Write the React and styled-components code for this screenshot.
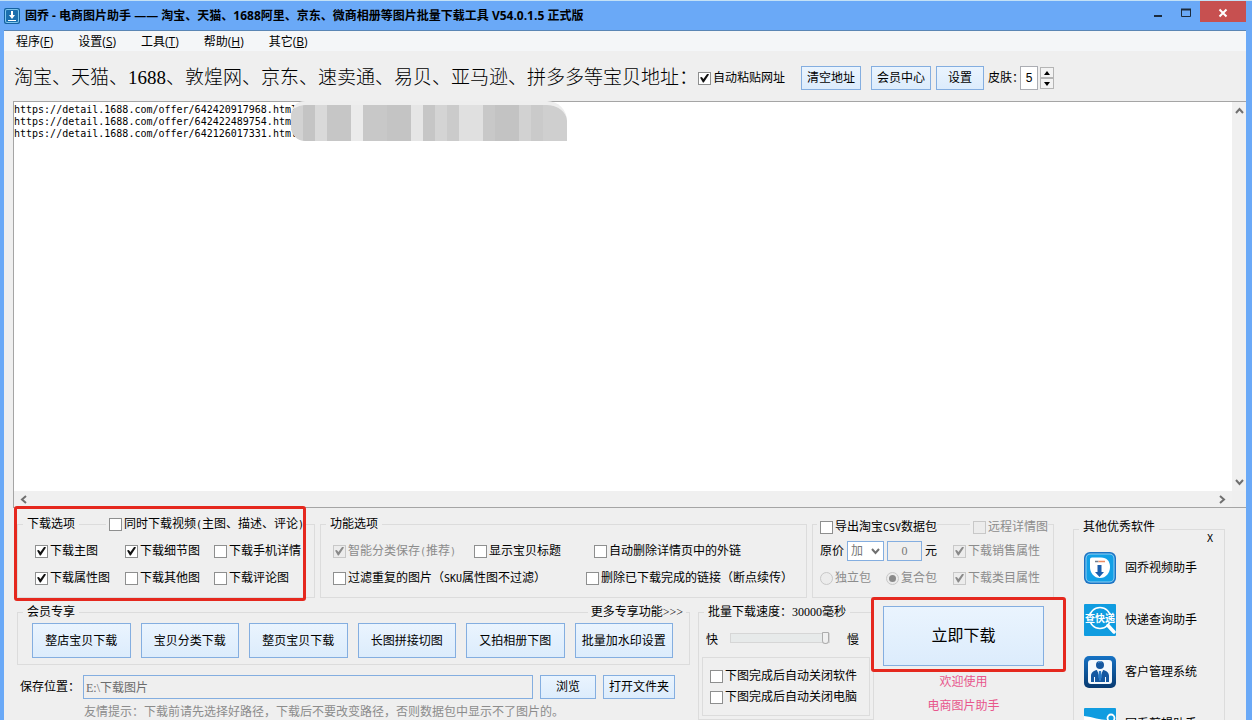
import { useState } from "react";
import styled, { createGlobalStyle, css } from "styled-components";

const URLS = [
  "https://detail.1688.com/offer/642420917968.html",
  "https://detail.1688.com/offer/642422489754.html",
  "https://detail.1688.com/offer/642126017331.html",
].join("\n");

const menus = [
  ["程序", "F"],
  ["设置", "S"],
  ["工具", "T"],
  ["帮助", "H"],
  ["其它", "B"],
];

const memberActions = [
  "整店宝贝下载",
  "宝贝分类下载",
  "整页宝贝下载",
  "长图拼接切图",
  "又拍相册下图",
  "批量加水印设置",
];

// [color, columns] pairs, left to right
const mosaicColumns = [
  ["#d2d2d2", 1],
  ["#c4c4c4", 1],
  ["#d9d9d9", 1],
  ["#c6c6c6", 2],
  ["#ebebeb", 1],
  ["#c8c8c8", 2],
  ["#c4c4c4", 2],
  ["#e6e6e6", 1],
  ["#c6c6c6", 1],
  ["#d4d4d4", 1],
  ["#cbcbcb", 1],
  ["#e0e0e0", 2],
  ["#c8c8c8", 1],
  ["#c3c3c3", 2],
  ["#d2d2d2", 1],
  ["#cacaca", 1],
  ["#cfcfcf", 2],
];

const Check = ({ children, ...props }) => (
  <CheckLabel $disabled={props.disabled}>
    <CheckInput type="checkbox" {...props} />
    <span>{children}</span>
  </CheckLabel>
);

const Radio = ({ children, ...props }) => (
  <CheckLabel $disabled={props.disabled}>
    <RadioInput type="radio" {...props} />
    <span>{children}</span>
  </CheckLabel>
);

const Logo = () => (
  <svg width="16" height="16" viewBox="0 0 16 16" aria-hidden="true">
    <rect width="16" height="16" rx="2" fill="#15619f" />
    <rect x="1" y="1" width="14" height="14" rx="2" fill="#7cc4ec" />
    <rect x="2" y="2" width="12" height="12" rx="1" fill="#1b6fae" />
    <path d="M7 3h2v4h2l-3 4-3-4h2z" fill="#fff" />
    <path d="M4 12h8v1H4z" fill="#fff" />
  </svg>
);

const VideoIcon = () => (
  <svg width="32" height="32" viewBox="0 0 32 32" aria-hidden="true">
    <rect width="32" height="32" rx="6" fill="#1b74c4" />
    <rect x="1.5" y="1.5" width="29" height="29" rx="5" fill="#8fd0f5" />
    <rect x="2.5" y="2.5" width="27" height="27" rx="4" fill="#12a0e6" />
    <path
      d="M8 5.500h9c6 0 9 4 9 9.500 0 6-4 11-10 11S6 21 6 15V7.500c0-1.200.8-2 2-2z"
      fill="#fff"
    />
    <path d="M11 9.500h3.500" stroke="#6f7f8f" strokeWidth="1.500" />
    <path d="M14.500 9.500H21" stroke="#ec8b62" strokeWidth="1.500" />
    <path d="M13.500 13h4v7h2.500l-4.500 5-4.500-5h2.500z" fill="#1a5fae" />
  </svg>
);

const ExpressIcon = () => (
  <svg width="32" height="32" viewBox="0 0 32 32" aria-hidden="true">
    <rect width="32" height="32" rx="1" fill="#109ce0" />
    <circle cx="16" cy="14" r="10.500" fill="none" stroke="#fff" strokeWidth="1.500" />
    <path d="M24 21.500l6 6.500" stroke="#fff" strokeWidth="3.500" strokeLinecap="round" />
    <rect x="2" y="10" width="28" height="9" fill="#109ce0" />
    <text
      x="16"
      y="18"
      textAnchor="middle"
      fontFamily="'Noto Sans CJK SC', sans-serif"
      fontWeight="700"
      fontSize="10"
      fill="#fff"
    >
      查快递
    </text>
  </svg>
);

const CustomerIcon = () => (
  <svg width="32" height="32" viewBox="0 0 32 32" aria-hidden="true">
    <defs>
      <linearGradient id="customer" x1="0" y1="0" x2="0" y2="1">
        <stop offset="0" stopColor="#1672c4" />
        <stop offset="1" stopColor="#083a70" />
      </linearGradient>
    </defs>
    <rect width="32" height="32" rx="5" fill="url(#customer)" />
    <rect x="4" y="4" width="24" height="24" rx="3" fill="#f4f9fd" />
    <circle cx="16" cy="9" r="4" fill="#1558a0" />
    <path d="M14 6.500c1-1 2.500-1 3.500-.5" stroke="#6fb0e6" fill="none" />
    <path d="M7 26v-6c0-3.500 2.500-5.500 6-6l3 7 3-7c3.500.5 6 2.500 6 6v6z" fill="#1558a0" />
    <path d="M13.500 14h5L16 25z" fill="#f4f9fd" />
    <path d="M15 15h2l1 6-2 4-2-4z" fill="#2a7ac4" />
    <path d="M10.500 21v5M21.500 21v5" stroke="#f4f9fd" />
  </svg>
);

const EditorIcon = () => (
  <svg width="32" height="32" viewBox="0 0 32 32" aria-hidden="true">
    <rect width="32" height="32" rx="1" fill="#109ce0" />
    <path d="M0 8c9 1 16 4 23 4l3 3c-9 1-18-1-26-3z" fill="#fff" />
    <circle cx="27" cy="10" r="3.500" fill="none" stroke="#fff" strokeWidth="1.800" />
    <circle cx="27" cy="22" r="3.500" fill="none" stroke="#fff" strokeWidth="1.800" />
  </svg>
);

const apps = [
  { name: "固乔视频助手", Icon: VideoIcon },
  { name: "快递查询助手", Icon: ExpressIcon },
  { name: "客户管理系统", Icon: CustomerIcon },
  { name: "固乔剪辑助手", Icon: EditorIcon },
];

const Chevron = ({ d }) => (
  <svg width="9" height="9" viewBox="0 0 9 9" aria-hidden="true">
    <path d={d} fill="none" stroke="#707070" strokeWidth="2" />
  </svg>
);

const App = () => {
  const [skin, setSkin] = useState(5);
  const [urls, setUrls] = useState(URLS);
  const [speed, setSpeed] = useState(30000);

  return (
    <>
      <GlobalStyle />
      <Window>
        <TitleBar>
          <Logo />
          <Title>
            固乔 - 电商图片助手 —— 淘宝、天猫、1688阿里、京东、微商相册等图片批量下载工具
            V54.0.1.5 正式版
          </Title>
          <WindowButton aria-label="最小化">
            <svg width="12" height="12" viewBox="0 0 12 12">
              <path d="M2 9h8" stroke="#1c2b3c" strokeWidth="2" />
            </svg>
          </WindowButton>
          <WindowButton aria-label="最大化">
            <svg width="12" height="12" viewBox="0 0 12 12">
              <path d="M1.500 2.500h9v7h-9z" fill="none" stroke="#1c2b3c" />
              <path d="M1 2.500h10" stroke="#1c2b3c" strokeWidth="2" />
            </svg>
          </WindowButton>
          <WindowButton $close aria-label="关闭">
            <svg width="12" height="12" viewBox="0 0 12 12">
              <path d="M2.500 2.500l7 7M9.500 2.500l-7 7" stroke="#fff" strokeWidth="2" />
            </svg>
          </WindowButton>
        </TitleBar>
        <Body>
          <MenuBar>
            {menus.map(([label, key]) => (
              <MenuItem key={key}>
                {label}(<u>{key}</u>)
              </MenuItem>
            ))}
          </MenuBar>
          <Toolbar>
            <Heading>
              淘宝、天猫、1688、敦煌网、京东、速卖通、易贝、亚马逊、拼多多等宝贝地址：
            </Heading>
            <Check defaultChecked>自动粘贴网址</Check>
            <ToolButtons>
              <Button onClick={() => setUrls("")}>清空地址</Button>
              <Button>会员中心</Button>
            </ToolButtons>
            <Button $wide>设置</Button>
            <SkinLabel htmlFor="skin">皮肤：</SkinLabel>
            <SkinInput id="skin" value={skin} readOnly />
            <Spinner>
              <SpinButton aria-label="增加" onClick={() => setSkin(skin + 1)}>
                <svg width="6" height="4" viewBox="0 0 6 4">
                  <path d="M3 0l3 4H0z" />
                </svg>
              </SpinButton>
              <SpinButton aria-label="减少" onClick={() => setSkin(skin - 1)}>
                <svg width="6" height="4" viewBox="0 0 6 4">
                  <path d="M0 0h6L3 4z" />
                </svg>
              </SpinButton>
            </Spinner>
          </Toolbar>
          <UrlPane>
            <UrlBox
              aria-label="宝贝地址"
              wrap="off"
              spellCheck="false"
              value={urls}
              onChange={(e) => setUrls(e.target.value)}
            />
            <Mosaic>
              {mosaicColumns.map(([color, span], i) => (
                <MosaicBar key={i} $color={color} $span={span} />
              ))}
            </Mosaic>
            <ScrollTrack $vertical>
              <Chevron d="M1 7l3.500-4L8 7" />
              <Chevron d="M1 2l3.500 4L8 2" />
            </ScrollTrack>
            <ScrollTrack>
              <Chevron d="M7 1L3 4.500 7 8" />
              <Chevron d="M2 1l4 3.500L2 8" />
            </ScrollTrack>
          </UrlPane>

          <Panel>
            <Settings>
              <OptionRow>
                <Group>
                  <Head>
                    <Legend>下载选项</Legend>
                    <HeadCheck $gap="27px">
                      <Check>
                        同时下载视频<Half>(</Half>主图、描述、评论<Half>)</Half>
                      </Check>
                    </HeadCheck>
                  </Head>
                  <Options $cols="90px 89px auto" $pad="17px">
                    <Check defaultChecked>下载主图</Check>
                    <Check defaultChecked>下载细节图</Check>
                    <Check>下载手机详情</Check>
                    <Check defaultChecked>下载属性图</Check>
                    <Check>下载其他图</Check>
                    <Check>下载评论图</Check>
                  </Options>
                  <Callout />
                </Group>
                <Group>
                  <Head>
                    <Legend>功能选项</Legend>
                  </Head>
                  <Options $cols="141px 120px auto" $pad="12px">
                    <Check defaultChecked disabled>
                      智能分类保存<Half>(</Half>推荐<Half>)</Half>
                    </Check>
                    <Check>显示宝贝标题</Check>
                    <Check>自动删除详情页中的外链</Check>
                  </Options>
                  <Options $cols="253px auto" $pad="12px">
                    <Check>
                      过滤重复的图片（<Half>SKU</Half>属性图不过滤）
                    </Check>
                    <Check>删除已下载完成的链接（断点续传）</Check>
                  </Options>
                </Group>
                <Group>
                  <Head $low>
                    <HeadCheck $gap="4px">
                      <Check>
                        导出淘宝<Half>CSV</Half>数据包
                      </Check>
                    </HeadCheck>
                    <HeadCheck $gap="33px">
                      <Check disabled>远程详情图</Check>
                    </HeadCheck>
                  </Head>
                  <Options $cols="133px auto" $pad="7px">
                    <Price>
                      <label htmlFor="mode">原价</label>
                      <SelectWrap>
                        <Select id="mode">
                          <option>加</option>
                          <option>减</option>
                        </Select>
                        <Chevron d="M1 2l3.500 4L8 2" />
                      </SelectWrap>
                      <PriceInput id="amount" defaultValue="0" />
                      <label htmlFor="amount">元</label>
                    </Price>
                    <Check defaultChecked disabled>
                      下载销售属性
                    </Check>
                    <Radios>
                      <Radio name="pack" disabled>
                        独立包
                      </Radio>
                      <Radio name="pack" defaultChecked disabled>
                        复合包
                      </Radio>
                    </Radios>
                    <Check defaultChecked disabled>
                      下载类目属性
                    </Check>
                  </Options>
                </Group>
              </OptionRow>

              <ActionRow>
                <Member>
                  <Group>
                    <Head>
                      <Legend>会员专享</Legend>
                      <More href="#more">更多专享功能&gt;&gt;&gt;</More>
                    </Head>
                    <MemberButtons>
                      {memberActions.map((name) => (
                        <Button key={name} $tall>
                          {name}
                        </Button>
                      ))}
                    </MemberButtons>
                  </Group>
                  <SaveRow>
                    <label htmlFor="path">保存位置：</label>
                    <PathInput id="path" defaultValue="E:\下载图片" />
                    <Button>浏览</Button>
                    <Button $wide>打开文件夹</Button>
                  </SaveRow>
                  <Hint>
                    友情提示：下载前请先选择好路径，下载后不要改变路径，否则数据包中显示不了图片的。
                  </Hint>
                </Member>
                <Group>
                  <Head>
                    <Legend as="label" htmlFor="speed">
                      批量下载速度：{speed}毫秒
                    </Legend>
                  </Head>
                  <SpeedRow>
                    快
                    <Slider
                      id="speed"
                      type="range"
                      min="0"
                      max="30000"
                      step="1000"
                      value={speed}
                      onChange={(e) => setSpeed(Number(e.target.value))}
                    />
                    慢
                  </SpeedRow>
                  <AfterBox>
                    <Check>下图完成后自动关闭软件</Check>
                    <Check>下图完成后自动关闭电脑</Check>
                  </AfterBox>
                </Group>
                <Download>
                  <DownloadButton>立即下载</DownloadButton>
                  <Welcome>欢迎使用</Welcome>
                  <Welcome>电商图片助手</Welcome>
                  <Callout $download />
                </Download>
              </ActionRow>
            </Settings>

            <Aside>
              <Head>
                <Legend>其他优秀软件</Legend>
              </Head>
              <AsideClose aria-label="X">X</AsideClose>
              <AppList>
                {apps.map(({ name, Icon }) => (
                  <AppLink key={name} href="#app">
                    <Icon />
                    {name}
                  </AppLink>
                ))}
              </AppList>
            </Aside>
          </Panel>
        </Body>
      </Window>
    </>
  );
};

// Styled Components
const GlobalStyle = createGlobalStyle`
  * {
    box-sizing: border-box;
  }
  body {
    margin: 0;
    font-family: "Liberation Serif", "Noto Sans CJK SC", serif;
    font-size: 12px;
    line-height: 16px;
    color: #000;
    white-space: nowrap;
  }
  button, input, select, textarea {
    font: inherit;
    color: inherit;
    margin: 0;
    padding: 0;
  }
  a {
    color: inherit;
    text-decoration: none;
  }
`;

const Window = styled.div`
  display: flex;
  flex-direction: column;
  height: 100vh;
  overflow: hidden;
  padding: 0 6px 0 4px;
  background: #6aa9f7;
  border-top: 1px solid #c3e1f6;
`;

const TitleBar = styled.header`
  display: flex;
  align-items: center;
  height: 30px;
  flex: none;
  box-shadow: 0 -1px 0 #5a86b5 inset;
`;

const Title = styled.h1`
  flex: 1;
  margin: 0 0 0 5px;
  font-family: "Open Sans", "Noto Sans CJK SC", sans-serif;
  font-size: 12px;
  font-weight: 700;
`;

const WindowButton = styled.button`
  display: flex;
  justify-content: center;
  align-items: center;
  align-self: flex-start;
  width: 28px;
  height: 21px;
  padding-top: 2px;
  border: none;
  background: transparent;
  ${(props) =>
    props.$close &&
    css`
      width: 46px;
      background: #c75050;
    `};
`;

const Body = styled.main`
  flex: 1;
  min-height: 0;
  display: flex;
  flex-direction: column;
  background: #efefef;
`;

const MenuBar = styled.nav`
  display: flex;
  align-items: center;
  gap: 25px;
  height: 20px;
  flex: none;
  padding: 2px 0 0 12px;
  background: #f4f6f8;
`;

const MenuItem = styled.button`
  border: none;
  background: none;
  font-family: "Open Sans", "Noto Sans CJK SC", sans-serif;
`;

const Toolbar = styled.div`
  display: flex;
  align-items: center;
  height: 50px;
  flex: none;
  padding: 4px 0 0 10px;
`;

const Heading = styled.h2`
  margin: 0;
  font-size: 19px;
  line-height: 24px;
  font-weight: 300;
`;

const ToolButtons = styled.div`
  display: flex;
  gap: 10px;
  margin: 0 5px 0 16px;
`;

const Button = styled.button`
  height: ${(props) => (props.$tall ? "35px" : "24px")};
  padding: 0 ${(props) => (props.$wide ? "11px" : "5px")};
  border: 1px solid #84aee0;
  background: linear-gradient(#eaf4fe, #dcecfc);
  cursor: pointer;
`;

const SkinLabel = styled.label`
  margin-left: 4px;
`;

const SkinInput = styled.input`
  width: 18px;
  height: 24px;
  margin: 0 2px 0 -4px;
  border: 1px solid #abadb3;
  background: #fff;
  text-align: center;
  font-family: "Liberation Sans", sans-serif;
`;

const Spinner = styled.div`
  display: flex;
  flex-direction: column;
`;

const SpinButton = styled.button`
  display: flex;
  justify-content: center;
  align-items: center;
  width: 14px;
  height: 11px;
  border: 1px solid #b5b5b5;
  background: #f3f3f3;
`;

const UrlPane = styled.section`
  flex: 1;
  min-height: 0;
  display: grid;
  grid-template: 1fr 16px / 1fr 14px;
  position: relative;
  margin-left: 9px;
  border: 1px solid #a5a5a5;
  border-right: none;
`;

const UrlBox = styled.textarea`
  display: block;
  width: 100%;
  height: 100%;
  padding: 2px 0 0;
  border: none;
  outline: none;
  resize: none;
  overflow: hidden;
  background: #fff;
  font-family: "DejaVu Sans Mono", monospace;
  font-size: 10px;
  line-height: 12px;
`;

// Covers the tail of the addresses
const Mosaic = styled.div`
  position: absolute;
  top: -1px;
  left: 277px;
  display: flex;
  width: 276px;
  height: 40px;
  overflow: hidden;
  border-top: 4px solid #eee;
  border-radius: 14px 20px 0 14px;
`;

const MosaicBar = styled.span`
  flex: ${(props) => props.$span};
  background: ${(props) => props.$color};
`;

const ScrollTrack = styled.div`
  display: flex;
  justify-content: space-between;
  align-items: center;
  padding: 0 5px;
  background: #f0f0f0;
  ${(props) =>
    props.$vertical &&
    css`
      flex-direction: column;
      padding: 4px 0;
    `};
`;

const Panel = styled.section`
  display: flex;
  flex: none;
  gap: 19px;
  padding: 16px 21px 0 13px;
`;

const Settings = styled.div`
  flex: 1;
`;

const OptionRow = styled.div`
  display: grid;
  grid-template-columns: 298fr 487fr 242fr;
  gap: 5px;
`;

const ActionRow = styled.div`
  display: grid;
  grid-template-columns: 1fr 176px 172px;
  gap: 8px;
  margin-top: 14px;
`;

const Group = styled.div`
  position: relative;
  display: flex;
  flex-direction: column;
  gap: 7px;
  padding-bottom: 9px;
  border: 1px solid #dcdcdc;
`;

const Head = styled.div`
  display: flex;
  align-items: center;
  height: ${(props) => (props.$low ? "26px" : "20px")};
  margin: -11px 0 ${(props) => (props.$low ? "-6px" : "0")};
`;

const Legend = styled.span`
  margin-left: 5px;
  padding: 0 4px;
  background: #efefef;
`;

const HeadCheck = styled.div`
  margin-left: ${(props) => props.$gap};
  padding-left: 3px;
  background: #efefef;
`;

const Options = styled.div`
  display: grid;
  grid-template-columns: ${(props) => props.$cols};
  grid-auto-rows: 20px;
  row-gap: 7px;
  align-items: center;
  padding-left: ${(props) => props.$pad};
`;

const CheckLabel = styled.label`
  display: flex;
  align-items: center;
  gap: 2px;
  color: ${(props) => (props.$disabled ? "#8c8c8c" : "#000")};
`;

const CheckInput = styled.input`
  appearance: none;
  display: flex;
  justify-content: center;
  align-items: center;
  flex: none;
  width: 13px;
  height: 13px;
  border: 1px solid #8e8f8f;
  background: #fff;
  &:checked::before {
    content: "";
    width: 9px;
    height: 9px;
    background: #111;
    clip-path: polygon(0 45%, 20% 38%, 38% 62%, 82% 0, 100% 10%, 42% 100%, 32% 100%);
  }
  &:disabled {
    border-color: #c8c8c8;
    background: #ececec;
  }
  &:disabled::before {
    background: #8a8a8a;
  }
`;

const RadioInput = styled(CheckInput)`
  border-radius: 50%;
  &:checked::before {
    width: 7px;
    height: 7px;
    border-radius: 50%;
    clip-path: none;
  }
`;

// Latin runs take half the width of a Chinese character
const Half = styled.span`
  font-family: "DejaVu Sans Mono", monospace;
  font-size: 10px;
`;

const Callout = styled.div`
  position: absolute;
  inset: -19px 8px -4px -4px;
  border: 3px solid #e5281e;
  border-radius: 3px;
  pointer-events: none;
  ${(props) =>
    props.$download &&
    css`
      inset: -15px -12px 48px -12px;
    `};
`;

const Price = styled.div`
  display: flex;
  align-items: center;
  gap: 3px;
`;

const SelectWrap = styled.div`
  display: grid;
  align-items: center;
  width: 37px;
  svg {
    grid-area: 1 / 1;
    justify-self: end;
    margin-right: 4px;
    pointer-events: none;
  }
`;

const Select = styled.select`
  grid-area: 1 / 1;
  appearance: none;
  width: 100%;
  height: 20px;
  padding-left: 3px;
  border: 1px solid #84aee0;
  border-radius: 0;
  background: #fff;
  color: #777;
`;

const PriceInput = styled.input`
  width: 35px;
  height: 20px;
  border: 1px solid #84aee0;
  background: #efefef;
  color: #777;
  text-align: center;
`;

const Radios = styled.div`
  display: flex;
  gap: 15px;
`;

const Member = styled.div`
  display: flex;
  flex-direction: column;
`;

const More = styled.a`
  margin: 0 3px 0 auto;
  padding: 0 3px;
  background: #efefef;
`;

const MemberButtons = styled.div`
  display: grid;
  grid-template-columns: repeat(6, 1fr);
  gap: 10px;
  margin: -6px 16px -3px 14px;
`;

const SaveRow = styled.div`
  display: flex;
  align-items: center;
  gap: 7px;
  margin: 10px 15px 5px 3px;
  label {
    margin-right: -4px;
  }
  ${Button} {
    min-width: 56px;
  }
  ${Button}:last-child {
    padding: 0 5px;
  }
`;

const PathInput = styled.input`
  flex: 1;
  height: 24px;
  padding-left: 2px;
  border: 1px solid #84aee0;
  background: #efefef;
  color: #6c6c6c;
`;

const Hint = styled.p`
  margin: 0 0 0 67px;
  color: #8c8c8c;
`;

const SpeedRow = styled.div`
  display: flex;
  align-items: center;
  justify-content: space-between;
  margin: 3px 14px 0 7px;
`;

const Slider = styled.input`
  appearance: none;
  width: 100px;
  height: 10px;
  margin: 0 6px 4px 0;
  border: 1px solid #d6d6d6;
  background: #e7eaea;
  &::-webkit-slider-thumb {
    appearance: none;
    width: 7px;
    height: 12px;
    border: 1px solid #adadad;
    border-radius: 1px 1px 4px 4px;
    background: #f0f0f0;
  }
`;

const AfterBox = styled.div`
  display: flex;
  flex-direction: column;
  justify-content: center;
  gap: 5px;
  flex: 1;
  margin: 2px 3px -6px;
  padding-left: 7px;
  border: 1px solid #dcdcdc;
`;

const Download = styled.div`
  position: relative;
  display: flex;
  flex-direction: column;
  align-items: center;
  gap: 8px;
  padding-right: 10px;
  margin-left: 1px;
`;

const DownloadButton = styled(Button)`
  width: 100%;
  height: 60px;
  margin-top: -6px;
  font-size: 16px;
`;

const Welcome = styled.p`
  margin: 0;
  color: #e8568c;
`;

const Aside = styled.aside`
  display: flex;
  flex-direction: column;
  width: 152px;
  height: 0;
  min-height: calc(100% - 5px);
  margin-top: 5px;
  border: 1px solid #dcdcdc;
  border-bottom: none;
`;

const AsideClose = styled.button`
  align-self: flex-end;
  height: 12px;
  margin: -2px 11px 0 0;
  border: none;
  background: none;
  font-family: "DejaVu Sans Mono", monospace;
  font-size: 10px;
  line-height: 12px;
`;

const AppList = styled.div`
  display: flex;
  flex-direction: column;
  gap: 20px;
  padding: 7px 0 0 10px;
`;

const AppLink = styled.a`
  display: flex;
  align-items: center;
  gap: 9px;
  svg {
    flex: none;
  }
`;

export default App;
